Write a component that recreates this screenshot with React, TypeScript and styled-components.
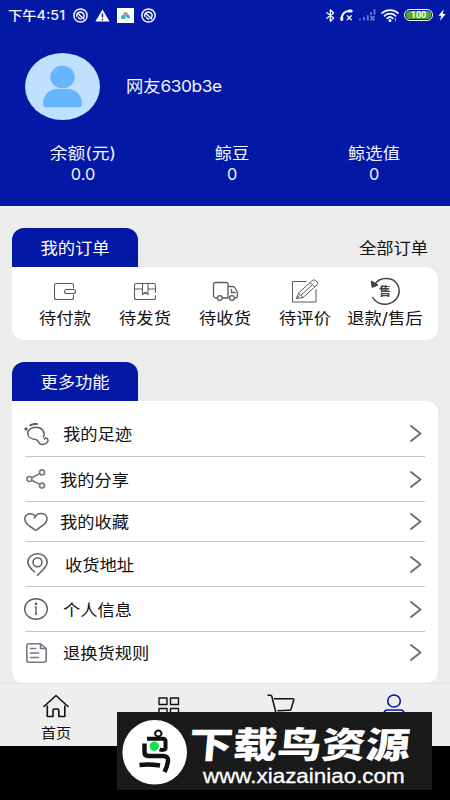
import React from "react";
import styled, { createGlobalStyle } from "styled-components";

const GlobalStyle = createGlobalStyle`
  * { box-sizing: border-box; }
  body { margin: 0; background: #000; }
  svg { display: block; flex: none; overflow: visible; }
`;

const BLUE = "#0319a5";

const Screen = styled.main`
  position: relative;
  width: 450px;
  height: 800px;
  overflow: hidden;
  background: #000;
  color: #111;
  font-family: Inter, "Noto Sans CJK SC", sans-serif;
`;
const Page = styled.div`
  height: 746px;
  background: #ececec;
  display: flex;
  flex-direction: column;
`;
const Header = styled.header`
  height: 206px;
  flex: none;
  background: ${BLUE};
  color: #f4f6ff;
  border-bottom: 1px solid #0a1c90;
`;
const StatusBar = styled.div`
  height: 30px;
  padding: 0 4px 0 8px;
  display: flex;
  align-items: center;
  justify-content: space-between;
`;
const StatusLeft = styled.div`
  display: flex;
  align-items: center;
  gap: 7px;
`;
const StatusRight = styled.div`
  display: flex;
  align-items: center;
  gap: 5px;
`;
const Clock = styled.div`
  width: 58px;
  font-size: 13px;
  line-height: 30px;
  font-weight: 500;
  white-space: nowrap;
  transform: scaleX(1.1);
  transform-origin: left;
`;
const Battery = styled.div`
  width: 29px;
  height: 12px;
  border: 1px solid #fff;
  border-radius: 6px;
  padding: 1px;
  display: flex;
`;
const BatteryFill = styled.div`
  flex: 1;
  border-radius: 4px;
  background: #4aae2c;
  color: #fff;
  font: 700 9px/8px Roboto, sans-serif;
  text-align: center;
`;
const Profile = styled.div`
  height: 112px;
  padding-left: 25px;
  display: flex;
  align-items: center;
  gap: 26px;
`;
const Text = styled.span<{ $size?: number; $origin?: string; $scale?: number }>`
  font-size: ${(p) => p.$size ?? 16}px;
  line-height: 21px;
  white-space: nowrap;
  transform: scaleX(${(p) => p.$scale ?? 1.08});
  transform-origin: ${(p) => p.$origin ?? "center"};
`;
const Latin = styled.span`
  font-size: 16px;
  letter-spacing: -0.4px;
`;
const Stats = styled.div`
  padding-top: 1px;
  display: grid;
  grid-template-columns: 165px 134px 151px;
  justify-items: center;
`;
const Stat = styled.div`
  display: flex;
  flex-direction: column;
  align-items: center;
`;
const SectionHead = styled.div<{ $top: number }>`
  margin: ${(p) => p.$top}px 22px 0 12px;
  height: 39px;
  flex: none;
  display: flex;
  justify-content: space-between;
  align-items: center;
`;
const SectionTab = styled.h2`
  margin: 0;
  width: 126px;
  height: 39px;
  padding-top: 1px;
  border-radius: 12px 12px 0 0;
  background: ${BLUE};
  color: #fff;
  font-weight: 400;
  font-size: 16px;
  display: flex;
  align-items: center;
  justify-content: center;
`;
const HeadLink = styled.div`
  padding-top: 1px;
  display: flex;
`;
const Orders = styled.section`
  margin: 0 12px;
  height: 73px;
  flex: none;
  background: #fff;
  border-radius: 0 12px 12px 12px;
  padding: 9px 13px 0;
  display: grid;
  grid-template-columns: repeat(5, 80px);
`;
const Order = styled.div`
  display: flex;
  flex-direction: column;
  align-items: center;
  gap: 2px;
`;
const OrderIcon = styled.div`
  height: 30px;
  display: flex;
  align-items: center;
`;
const Menu = styled.section`
  margin: 0 12px;
  height: 282px;
  flex: none;
  background: #fff;
  border-radius: 0 12px 12px 12px;
  padding: 0 13px;
`;
const MenuRow = styled.div<{ $height: number; $shift?: number; $last?: boolean }>`
  height: ${(p) => p.$height}px;
  padding-top: ${(p) => Math.max(0, p.$shift ?? 0)}px;
  padding-bottom: ${(p) => Math.max(0, -(p.$shift ?? 0))}px;
  border-bottom: ${(p) => (p.$last ? "0" : "1px solid #c6c6c6")};
  display: flex;
  align-items: center;
`;
const MenuIcon = styled.div<{ $slot: number }>`
  width: ${(p) => p.$slot}px;
`;
const MenuLabel = styled.div`
  flex: 1;
  padding-top: 2px;
  display: flex;
`;
const MenuArrow = styled.div`
  padding-right: 3px;
`;
const TabBar = styled.nav`
  flex: 1;
  border-top: 1px solid #e3e3e3;
  background: #eee;
  display: grid;
  grid-template-columns: repeat(4, 112.5px);
`;
const TabItem = styled.div<{ $active?: boolean }>`
  padding-top: 11px;
  display: flex;
  flex-direction: column;
  align-items: center;
  gap: 5px;
  color: ${(p) => (p.$active ? BLUE : "#111")};
`;
const Watermark = styled.aside`
  position: absolute;
  left: 117px;
  top: 712px;
  width: 315px;
  height: 78px;
  background: #1a1a1a;
  color: #fff;
  display: flex;
  padding: 8px 5px;
`;
const BrandText = styled.div`
  padding-left: 1px;
  display: flex;
  flex-direction: column;
  align-items: flex-start;
`;
const BrandName = styled.div`
  margin-top: 3px;
  height: 39px;
  font-family: "Noto Sans CJK SC", sans-serif;
  font-size: 36px;
  line-height: 39px;
  font-weight: 900;
  white-space: nowrap;
  transform: scaleX(1.23) skewX(-4deg);
  transform-origin: left;
`;
const BrandUrl = styled.div`
  margin: 3px 0 0 14px;
  font: 20px/22px "Liberation Sans", sans-serif;
  -webkit-text-stroke: 0.3px #fff;
  white-space: nowrap;
  transform: scaleX(1.12);
  transform-origin: left;
`;

const line = {
  fill: "none",
  stroke: "currentColor",
  strokeLinecap: "round" as const,
  strokeLinejoin: "round" as const,
};

const Swirl = () => (
  <svg width="15" height="15" viewBox="0 0 15 15" {...line} strokeWidth="1.5">
    <circle cx="7.5" cy="7.5" r="6.6" />
    <path d="M3.7 8.2a3.8 3.8 0 0 1 7.3-1.700 3.700 3.700 0 0 1-.7 3.500M5.800 6.300l5 4.700M5.500 9.300a2 2 0 0 0 2.500 1.500" />
  </svg>
);
const Warning = () => (
  <svg width="15" height="13" viewBox="0 0 15 13">
    <path d="M7.5.4 14.6 12.5H.4z" fill="#fff" />
    <path d="M7.5 4.5v4M7.5 9.8v1.4" stroke={BLUE} strokeWidth="1.4" />
  </svg>
);
const AppBadge = () => (
  <svg width="17" height="15" viewBox="0 0 17 15">
    <path d="M0 0h17v15H0z" fill="#fff" />
    <path d="M6 6.500c.5-3.500 4.500-3.500 5 0z" fill="#e8798a" />
    <path d="M4 9.500c0-2 1.500-3 4.500-3v4c-2 1-4.500 1-4.500-1z" fill="#2fb5c9" />
    <path d="M8 7c2-1.500 4.800-.5 4.800 1.700 0 2-2 2.300-2.800.8z" fill="#27b796" />
  </svg>
);
const Bluetooth = () => (
  <svg width="9" height="13" viewBox="0 0 9 13" {...line} strokeWidth="1.300">
    <path d="M.8 3.700 7.700 9 4.300 12.200V.8L7.700 4 .8 9.300" />
  </svg>
);
const CallOff = () => (
  <svg width="13" height="12" viewBox="0 0 13 12" {...line}>
    <path d="M1.700 10.300C1.400 5 5 1.500 10.700 1.700" strokeWidth="2" />
    <path d="M1.800 9v1.500M9 1.900h2.200" strokeWidth="3" />
    <path d="m7.300 6.800 4 4m0-4-4 4" strokeWidth="1.300" />
  </svg>
);
const Signal = () => (
  <svg width="18" height="12" viewBox="0 0 18 12" {...line} stroke="#6b78cf" strokeWidth="1.800" strokeLinecap="butt">
    <path d="M2 9.500V11.500M6 8v3.500M9.800 6v5.500M13 3v3M16.500 0v5.500M12.500 7l4 4.500m0-4.500-4 4.500" />
  </svg>
);
const Wifi = () => (
  <svg width="18" height="13" viewBox="0 0 18 13" {...line} strokeWidth="1.700">
    <path d="M1 4.200C5.500.1 12.500.1 17 4.200M3.500 6.800c3-2.900 8-2.900 11 0M6.200 9.300c1.600-1.500 4-1.500 5.600 0" />
    <circle cx="9" cy="11.500" r=".7" fill="currentColor" />
    <path d="M14.500 9.500v2.500" strokeWidth="1" stroke="#aab3e6" />
  </svg>
);
const Bolt = () => (
  <svg width="8" height="12" viewBox="0 0 8 12">
    <path d="M5.800.2.400 6.700h2.800L2 11.800l5.700-6.700H4.700z" fill="#fff" />
  </svg>
);
const Avatar = () => (
  <svg width="75" height="67" viewBox="0 0 75 67">
    <ellipse cx="37.500" cy="33.500" rx="37.500" ry="33.500" fill="#bfe0ff" />
    <ellipse cx="37.500" cy="24" rx="12.200" ry="11.200" fill="#65b5ff" />
    <path d="M18 50.500c0-8 6-14.500 14-14.500h11c8 0 14 6.500 14 14.500 0 2.500-1 3.700-3.500 3.700h-32c-2.500 0-3.500-1.200-3.500-3.700z" fill="#65b5ff" />
  </svg>
);

const Wallet = () => (
  <svg width="22" height="17" viewBox="0 0 22 17" {...line} stroke="#5c5c5c" strokeWidth="1.100">
    <path d="M19.500 5V2.500q0-2-2-2h-15q-2 0-2 2v12q0 2 2 2h15q2 0 2-2V12" />
    <path d="M12.500 6.500h7a2 2 0 0 1 0 4h-7a2 2 0 0 1 0-4z" />
  </svg>
);
const Parcel = () => (
  <svg width="22" height="17" viewBox="0 0 22 17" {...line} stroke="#5c5c5c" strokeWidth="1.100">
    <path d="M21.500 9.500V2.500q0-2-2-2h-17q-2 0-2 2v12q0 2 2 2h17q2 0 2-2v-2M.5 6h8m5.500 0h7.500M8.500.5v11l2.700-2.200L14 11.500V.5" />
  </svg>
);
const Truck = () => (
  <svg width="25" height="19" viewBox="0 0 25 19" {...line} stroke="#5c5c5c" strokeWidth="1.300">
    <path d="M4 16H3q-2.500 0-2.500-2.500V2.500Q.5.500 2.500.500H13q2 0 2 2V16H9.500M15 4.500h4.500q1.500 0 2.500 1.500l2.300 4v4q0 2-2 2M18.500 7.500v3H22" />
    <circle cx="6.800" cy="16" r="2.400" />
    <circle cx="19" cy="16" r="2.400" />
  </svg>
);
const Edit = () => (
  <svg width="27" height="24" viewBox="0 0 27 24" {...line} stroke="#5c5c5c" strokeLinecap="butt">
    <path d="M14.500 2.500H.5v20.500H24V10" />
    <path d="M4.500 19.500 6.500 14 20 1.700q1.500-1.500 3.300-.3l1.700 1.500q1.500 1.500 0 3L11 18.500zM6.500 14l4.500 4.500M18 3.500l5 4.500M9 16.200 20.500 5.600M4.500 19.500l3-3" />
  </svg>
);
const RefundRing = styled.div`
  position: relative;
  width: 29px;
  height: 27px;
  display: flex;
  align-items: center;
  justify-content: center;
  color: #444;
  font-family: "Noto Sans CJK SC", sans-serif;
  font-size: 12px;
  font-weight: 700;
  line-height: 14px;
`;
const RingArt = styled.svg`
  position: absolute;
  inset: 0;
`;
const Refund = () => (
  <RefundRing>
    售
    <RingArt width="29" height="27" viewBox="0 0 29 27" {...line} stroke="#444" strokeWidth="1.500">
      <path d="M3.500 6.500C9-2 23-1.500 27 7.500c3.500 8-1.500 17-10.500 18.600C10 27 4 24 1.800 19.500" />
      <path d="M.5 3.500 1.300 9l5-2z" fill="#444" />
    </RingArt>
  </RefundRing>
);

const Foot = () => (
  <svg width="24" height="22" viewBox="0 0 24 22" {...line} stroke="#606060" strokeWidth="1.500">
    <path d="M18.500 14C20.500 9 17 4.300 11 4.300 6 4.300 2.700 7 2.700 10.300c0 3.700 3.500 6 8 6.200 3.300 0 2 5 6.300 5 3.500 0 6-2 6-4 0-2.500-2.500-3-3.500-1.500" />
    <path d="M5.300 2.300C7.200 1.200 9.500.8 12 1" strokeWidth="2" />
    <circle cx="1" cy="6" r=".9" fill="#606060" />
  </svg>
);
const Share = () => (
  <svg width="20" height="20" viewBox="0 0 20 20" {...line} stroke="#777a80" strokeWidth="1.600">
    <circle cx="3.400" cy="10" r="2.500" />
    <circle cx="16" cy="3.400" r="2.500" />
    <circle cx="16" cy="16.600" r="2.500" />
    <path d="m5.700 8.800 8-4.200M5.700 11.200l8 4.200" />
  </svg>
);
const Heart = () => (
  <svg width="24" height="18" viewBox="0 0 24 18" {...line} stroke="#606060" strokeWidth="1.500">
    <path d="M11.700 3.500C8-1 .8.300.8 6c0 3 2.200 5 4.200 6.700l5.500 4q1.200.9 2.400 0l5.600-4C20.800 11 23 9 23 6 23-.5 13.500-1.500 10.500 5" />
  </svg>
);
const Pin = () => (
  <svg width="21" height="23" viewBox="0 0 21 23" {...line} stroke="#606060" strokeWidth="1.600">
    <path d="M7.500 19C3 15 .8 12.500.8 9.300.8 4.500 5 .8 10.500.8s9.700 3.700 9.700 8.500c0 4.700-5 8.200-9.700 12.900" />
    <circle cx="10.500" cy="9.300" r="4.500" />
  </svg>
);
const Info = () => (
  <svg width="24" height="22" viewBox="0 0 24 22" {...line} stroke="#606060" strokeWidth="1.400">
    <ellipse cx="12" cy="11" rx="11.300" ry="10.200" />
    <path d="M11.300 9H12v7m-.7 0h1.400" />
    <circle cx="12" cy="5.800" r=".7" fill="#606060" />
  </svg>
);
const Doc = () => (
  <svg width="21" height="20" viewBox="0 0 21 20" {...line} stroke="#74777f" strokeWidth="1.600">
    <path d="M14.500.8H3Q.8.800.8 3v14q0 2.200 2.200 2.200h15q2.200 0 2.200-2.200V5.500zM14.500.8v4.700h5.700M4.500 5.500h5M4.500 10h8M4.500 14.500h8" />
  </svg>
);
const Chevron = () => (
  <svg width="12" height="17" viewBox="0 0 12 17" {...line} stroke="#6c6c6c" strokeWidth="1.900">
    <path d="m1 1 9.500 7.500L1 16" />
  </svg>
);

const Home = () => (
  <svg width="26" height="22" viewBox="0 0 26 22" {...line} strokeWidth="1.600">
    <path d="M1 11.500 13 .500l12 11M4.300 11v10.500H10v-6q0-1.500 1.500-1.500h2.800q1.500 0 1.500 1.500v6h6V11" />
  </svg>
);
const Grid = () => (
  <svg width="22" height="22" viewBox="0 0 22 22" {...line} strokeWidth="1.400">
    <path d="M1 3h8v6.500H1zM12.500 3h8v6.500h-8zM1 13.500h8V20H1zM12.500 13.500h8V20h-8z" />
  </svg>
);
const Cart = () => (
  <svg width="28" height="24" viewBox="0 0 28 24" {...line} strokeWidth="1.500">
    <path d="M1 .3h2.500q1 0 1.300 1L9 18h15M7.500 3.700H26q1 0 .8 1L24 14.200q-.3 1-1.500 1L11 15.700" />
  </svg>
);
const Person = () => (
  <svg width="22" height="26" viewBox="0 0 22 26" {...line} strokeWidth="1.600">
    <ellipse cx="11" cy="6" rx="6.300" ry="6" />
    <path d="M.800 22v-3q0-4 4-4h12.400q4 0 4 4v3z" />
  </svg>
);
const BirdLogo = () => (
  <svg width="66" height="66" viewBox="0 0 66 66">
    <circle cx="32.700" cy="32.300" r="32.300" fill="#fff" />
    <g fill="none" stroke="#111" strokeWidth="4.500" strokeLinejoin="round">
      <ellipse cx="36.300" cy="13.500" rx="3.200" ry="3" strokeWidth="2" />
      <path d="M25 18.800h16q2.500 0 2.500 2.500v7.500q-2 2-6 .5" strokeWidth="4" />
      <path d="M22.500 23.500v8.500q0 4 4 4h14.500q5.500 0 5 5-.5 5-3.500 11" />
      <path d="M17.500 45q10-1 20.500.5" />
    </g>
    <circle cx="32.300" cy="26.300" r="4.700" fill="#16df50" />
  </svg>
);

const stats = [
  ["余额(元)", "0.0"],
  ["鲸豆", "0"],
  ["鲸选值", "0"],
];
const orders = [
  { label: "待付款", icon: <Wallet /> },
  { label: "待发货", icon: <Parcel /> },
  { label: "待收货", icon: <Truck /> },
  { label: "待评价", icon: <Edit /> },
  { label: "退款/售后", icon: <Refund /> },
];
const menu = [
  { label: "我的足迹", icon: <Foot />, height: 56, slot: 38, inset: 0, shift: 10 },
  { label: "我的分享", icon: <Share />, height: 45, slot: 35, inset: 1 },
  { label: "我的收藏", icon: <Heart />, height: 40, slot: 35, inset: -1 },
  { label: "收货地址", icon: <Pin />, height: 45, slot: 40, inset: 2 },
  { label: "个人信息", icon: <Info />, height: 45, slot: 38, inset: -1 },
  { label: "退换货规则", icon: <Doc />, height: 51, slot: 38, inset: 1, shift: -10 },
];
const IconInset = styled.div<{ $x: number }>`
  margin-left: ${(p) => p.$x}px;
`;

export default function App() {
  return (
    <Screen>
      <GlobalStyle />
      <Page>
        <Header>
          <StatusBar>
            <StatusLeft>
              <Clock>下午4:51</Clock>
              <Swirl />
              <Warning />
              <AppBadge />
              <Swirl />
            </StatusLeft>
            <StatusRight>
              <Bluetooth />
              <CallOff />
              <Signal />
              <Wifi />
              <Battery>
                <BatteryFill>100</BatteryFill>
              </Battery>
              <Bolt />
            </StatusRight>
          </StatusBar>
          <Profile>
            <Avatar />
            <Text $origin="left">
              网友<Latin>630b3e</Latin>
            </Text>
          </Profile>
          <Stats>
            {stats.map(([name, value]) => (
              <Stat key={name}>
                <Text $scale={name.includes("(") ? 1.11 : 1.08}>{name}</Text>
                <Text $scale={1.02}>{value}</Text>
              </Stat>
            ))}
          </Stats>
        </Header>
        <SectionHead $top={22}>
          <SectionTab>
            <Text>我的订单</Text>
          </SectionTab>
          <HeadLink>
            <Text $origin="right">全部订单</Text>
          </HeadLink>
        </SectionHead>
        <Orders>
          {orders.map((o) => (
            <Order key={o.label}>
              <OrderIcon>{o.icon}</OrderIcon>
              <Text>{o.label}</Text>
            </Order>
          ))}
        </Orders>
        <SectionHead $top={22}>
          <SectionTab>
            <Text>更多功能</Text>
          </SectionTab>
        </SectionHead>
        <Menu>
          {menu.map((m, i) => (
            <MenuRow key={m.label} $height={m.height} $shift={m.shift} $last={i === menu.length - 1}>
              <MenuIcon $slot={m.slot}>
                <IconInset $x={m.inset}>{m.icon}</IconInset>
              </MenuIcon>
              <MenuLabel>
                <Text $origin="left">{m.label}</Text>
              </MenuLabel>
              <MenuArrow>
                <Chevron />
              </MenuArrow>
            </MenuRow>
          ))}
        </Menu>
        <TabBar>
          <TabItem>
            <Home />
            <Text $size={14}>首页</Text>
          </TabItem>
          <TabItem>
            <Grid />
          </TabItem>
          <TabItem>
            <Cart />
          </TabItem>
          <TabItem $active>
            <Person />
          </TabItem>
        </TabBar>
      </Page>
      <Watermark>
        <BirdLogo />
        <BrandText>
          <BrandName>下载鸟资源</BrandName>
          <BrandUrl>www.xiazainiao.com</BrandUrl>
        </BrandText>
      </Watermark>
    </Screen>
  );
}
